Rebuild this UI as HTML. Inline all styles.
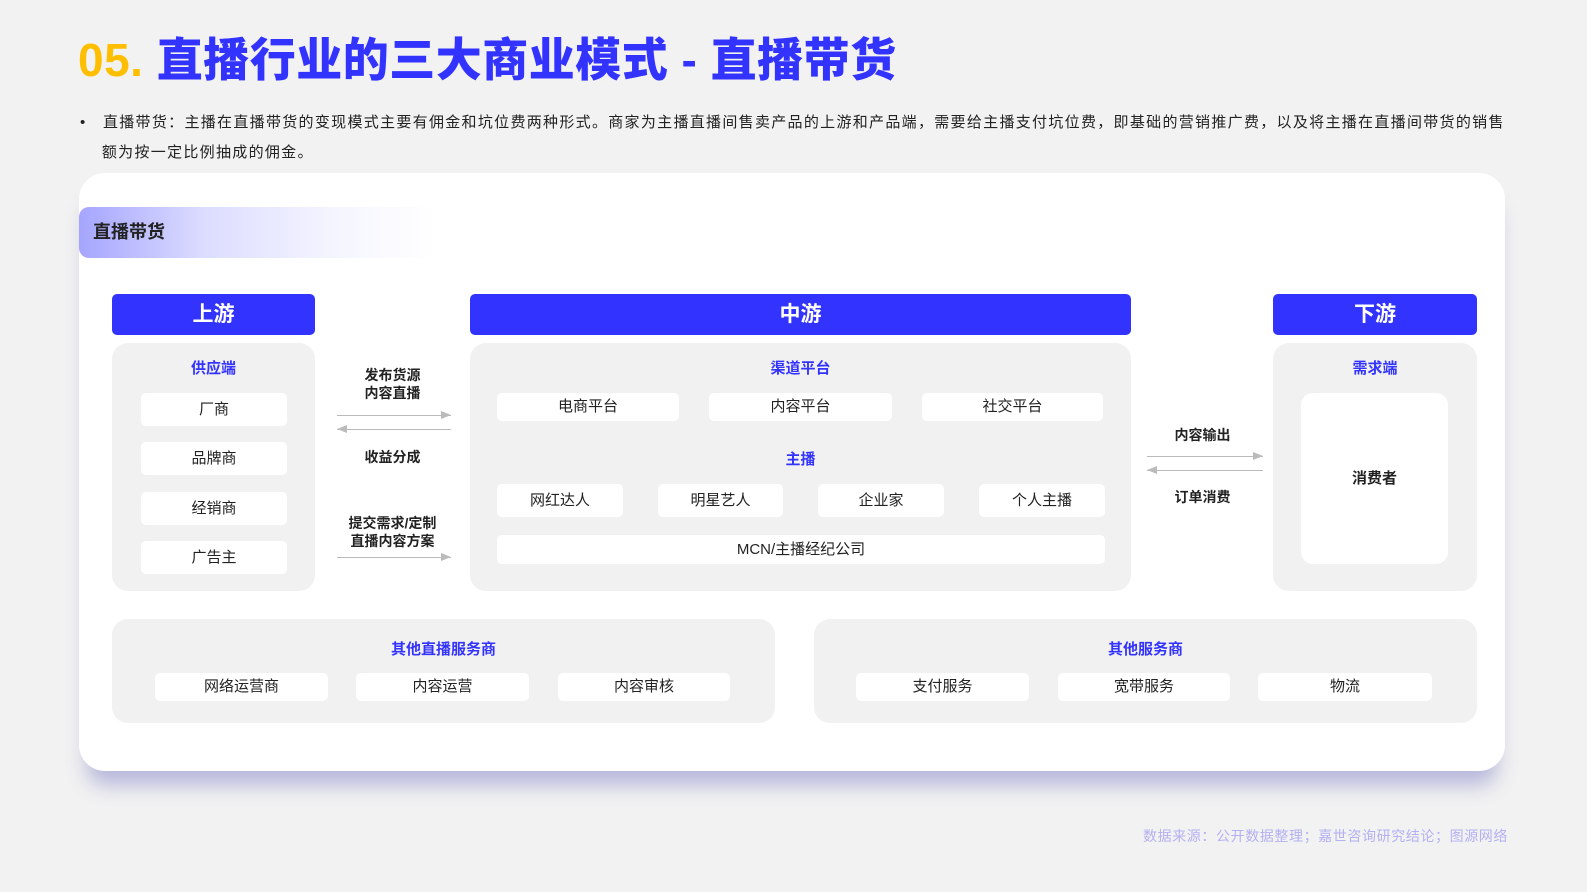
<!DOCTYPE html>
<html><head><meta charset="utf-8"><style>
*{margin:0;padding:0;box-sizing:border-box}
body{width:1587px;height:892px;background:#f2f2f2;position:relative;overflow:hidden;font-family:"Liberation Sans","Noto Sans CJK SC",sans-serif;color:#222}
.a{position:absolute}
.t{left:78px;top:24px;font-size:46px;font-weight:900;color:#3333ff;white-space:nowrap;letter-spacing:0.5px}
.t span{color:#ffbf00}
.p{left:80px;width:1460px;font-size:15px;line-height:30px;top:108px;color:#222;letter-spacing:1.3px}
.card{left:79px;top:173px;width:1426px;height:598px;background:#fff;border-radius:26px;box-shadow:0 22px 20px -8px rgba(110,110,190,.45)}
.band{left:79px;top:207px;width:356px;height:51px;border-radius:10px 0 0 10px;background:linear-gradient(90deg,#a5a5ff 0%,#dcdcff 35%,#f4f4ff 70%,#fff 100%);font-size:18px;font-weight:700;line-height:51px;padding-left:14px}
.h{background:#3333ff;color:#fff;font-size:21px;font-weight:700;border-radius:5px;text-align:center;line-height:41px;height:41px;top:294px}
.pn{background:#f1f1f1;border-radius:16px}
.b{background:#fff;border-radius:5px;text-align:center;font-size:15px;color:#222}
.l{color:#3333ff;font-weight:700;font-size:15px;text-align:center}
.s{font-size:14px;font-weight:700;text-align:center;line-height:18px}
.ar{height:1px;background:#bbb}
.ar.r:after{content:"";position:absolute;right:0;top:-4px;border-left:10px solid #bbb;border-top:4px solid transparent;border-bottom:4px solid transparent}
.ar.lf:before{content:"";position:absolute;left:0;top:-4px;border-right:10px solid #bbb;border-top:4px solid transparent;border-bottom:4px solid transparent}
</style></head><body>
<div class="a t"><span>05.</span> 直播行业的三大商业模式 - 直播带货</div>
<div class="a p">•&nbsp;&nbsp;&nbsp;直播带货：主播在直播带货的变现模式主要有佣金和坑位费两种形式。商家为主播直播间售卖产品的上游和产品端，需要给主播支付坑位费，即基础的营销推广费，以及将主播在直播间带货的销售<br>&nbsp;&nbsp;&nbsp;&nbsp;额为按一定比例抽成的佣金。</div>
<div class="a card"></div>
<div class="a band">直播带货</div>

<div class="a h" style="left:112px;width:203px">上游</div>
<div class="a h" style="left:470px;width:661px">中游</div>
<div class="a h" style="left:1273px;width:204px">下游</div>

<div class="a pn" style="left:112px;top:343px;width:203px;height:248px"></div>
<div class="a pn" style="left:470px;top:343px;width:661px;height:248px"></div>
<div class="a pn" style="left:1273px;top:343px;width:204px;height:248px"></div>

<div class="a l" style="left:112px;width:203px;top:357px">供应端</div>
<div class="a b" style="left:141px;width:146px;top:393px;height:33px;line-height:33px">厂商</div>
<div class="a b" style="left:141px;width:146px;top:442px;height:33px;line-height:33px">品牌商</div>
<div class="a b" style="left:141px;width:146px;top:492px;height:33px;line-height:33px">经销商</div>
<div class="a b" style="left:141px;width:146px;top:541px;height:33px;line-height:33px">广告主</div>

<div class="a s" style="left:320px;width:145px;top:366px">发布货源<br>内容直播</div>
<div class="a ar r" style="left:337px;width:114px;top:415px"></div>
<div class="a ar lf" style="left:337px;width:114px;top:429px"></div>
<div class="a s" style="left:320px;width:145px;top:448px">收益分成</div>
<div class="a s" style="left:320px;width:145px;top:514px">提交需求/定制<br>直播内容方案</div>
<div class="a ar r" style="left:337px;width:114px;top:557px"></div>

<div class="a l" style="left:470px;width:661px;top:357px">渠道平台</div>
<div class="a b" style="left:497px;width:182px;top:393px;height:28px;line-height:28px">电商平台</div>
<div class="a b" style="left:709px;width:183px;top:393px;height:28px;line-height:28px">内容平台</div>
<div class="a b" style="left:922px;width:181px;top:393px;height:28px;line-height:28px">社交平台</div>
<div class="a l" style="left:470px;width:661px;top:448px">主播</div>
<div class="a b" style="left:497px;width:126px;top:484px;height:33px;line-height:33px">网红达人</div>
<div class="a b" style="left:658px;width:125px;top:484px;height:33px;line-height:33px">明星艺人</div>
<div class="a b" style="left:818px;width:126px;top:484px;height:33px;line-height:33px">企业家</div>
<div class="a b" style="left:979px;width:126px;top:484px;height:33px;line-height:33px">个人主播</div>
<div class="a b" style="left:497px;width:608px;top:535px;height:29px;line-height:29px">MCN/主播经纪公司</div>

<div class="a s" style="left:1135px;width:135px;top:426px">内容输出</div>
<div class="a ar r" style="left:1147px;width:116px;top:456px"></div>
<div class="a ar lf" style="left:1147px;width:116px;top:470px"></div>
<div class="a s" style="left:1135px;width:135px;top:488px">订单消费</div>

<div class="a l" style="left:1273px;width:204px;top:357px">需求端</div>
<div class="a b" style="left:1301px;width:147px;top:393px;height:171px;line-height:171px;border-radius:12px;font-weight:700">消费者</div>

<div class="a pn" style="left:112px;top:619px;width:663px;height:104px"></div>
<div class="a pn" style="left:814px;top:619px;width:663px;height:104px"></div>
<div class="a l" style="left:112px;width:663px;top:638px">其他直播服务商</div>
<div class="a l" style="left:814px;width:663px;top:638px">其他服务商</div>
<div class="a b" style="left:155px;width:173px;top:673px;height:28px;line-height:28px">网络运营商</div>
<div class="a b" style="left:356px;width:173px;top:673px;height:28px;line-height:28px">内容运营</div>
<div class="a b" style="left:558px;width:172px;top:673px;height:28px;line-height:28px">内容审核</div>
<div class="a b" style="left:856px;width:173px;top:673px;height:28px;line-height:28px">支付服务</div>
<div class="a b" style="left:1058px;width:172px;top:673px;height:28px;line-height:28px">宽带服务</div>
<div class="a b" style="left:1258px;width:174px;top:673px;height:28px;line-height:28px">物流</div>

<div class="a" style="right:79px;top:826px;font-size:14px;letter-spacing:0.6px;color:#b4b0f2;white-space:nowrap">数据来源：公开数据整理；嘉世咨询研究结论；图源网络</div>
</body></html>
